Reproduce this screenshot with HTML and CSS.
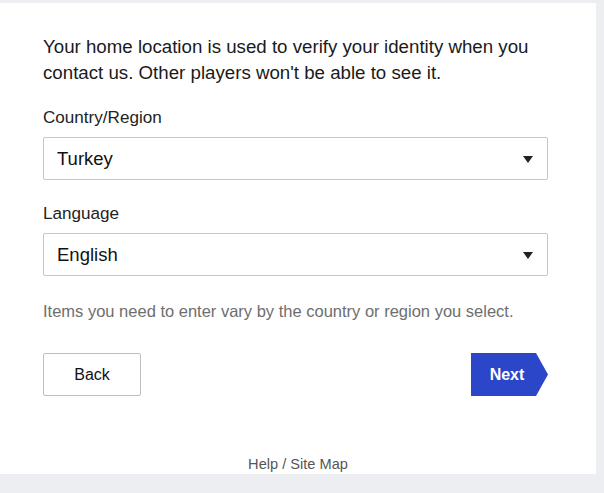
FILE: index.html
```html
<!DOCTYPE html>
<html>
<head>
<meta charset="utf-8">
<link rel="stylesheet" href="styles.css">
</head>
<body>
<div class="page">
  <main class="panel">
    <p class="intro">Your home location is used to verify your identity when you contact us. Other players won't be able to see it.</p>
    <div class="field">
      <label class="label">Country/Region</label>
      <div class="select"><span>Turkey</span><svg class="caret" width="10" height="7" viewBox="0 0 10 7"><path d="M0 0h10L5 7z" fill="#222"/></svg></div>
    </div>
    <div class="field">
      <label class="label">Language</label>
      <div class="select"><span>English</span><svg class="caret" width="10" height="7" viewBox="0 0 10 7"><path d="M0 0h10L5 7z" fill="#222"/></svg></div>
    </div>
    <p class="hint">Items you need to enter vary by the country or region you select.</p>
    <div class="actions">
      <button class="btn-back">Back</button>
      <button class="btn-next">Next</button>
    </div>
    <footer class="foot">Help / Site Map</footer>
  </main>
</div>
</body>
</html>
```

FILE: styles.css
```css
html, body { margin: 0; padding: 0; }
body {
  background: #eceef1;
  font-family: "Liberation Sans", Arial, sans-serif;
  color: #1a1a1a;
  width: 604px;
  height: 493px;
  overflow: hidden;
}
.page { padding-top: 3px; }
.panel {
  background: #fff;
  width: 596px;
  height: 471px;
  box-sizing: border-box;
  padding: 31px 0 0 43px;
  display: flex;
  flex-direction: column;
}
.intro {
  margin: 0;
  width: 510px;
  font-size: 18.7px;
  line-height: 26px;
  color: #1a1a1a;
}
.field { margin-top: 22px; display: flex; flex-direction: column; }
.field + .field { margin-top: 24px; }
.label { font-size: 17.1px; line-height: 20px; color: #222; }
.select {
  margin-top: 9px;
  width: 505px;
  height: 43px;
  box-sizing: border-box;
  border: 1px solid #c6c6c6;
  border-radius: 2px;
  display: flex;
  align-items: center;
  justify-content: space-between;
  padding: 0 14px 0 13px;
  font-size: 18.5px;
  color: #111;
}
.caret { margin-top: 1px; }
.hint {
  margin: 25px 0 0;
  font-size: 16.5px;
  line-height: 20px;
  color: #6e6e6e;
}
.actions {
  margin-top: 32px;
  width: 505px;
  display: flex;
  justify-content: space-between;
}
.btn-back {
  width: 98px;
  height: 43px;
  background: #fff;
  border: 1px solid #bdbdbd;
  border-radius: 2px;
  font-family: inherit;
  font-size: 16px;
  color: #111;
  padding: 0;
}
.btn-next {
  width: 77px;
  height: 43px;
  border: 0;
  padding: 0 5px 0 0;
  background: #2c46c9;
  color: #fff;
  font-family: inherit;
  font-size: 16px;
  font-weight: bold;
  clip-path: polygon(0 0, 65px 0, 77px 50%, 65px 100%, 0 100%);
}
.foot {
  margin-top: auto;
  margin-left: -43px;
  padding-bottom: 1px;
  text-align: center;
  font-size: 14.6px;
  line-height: 18px;
  color: #555;
}
```
